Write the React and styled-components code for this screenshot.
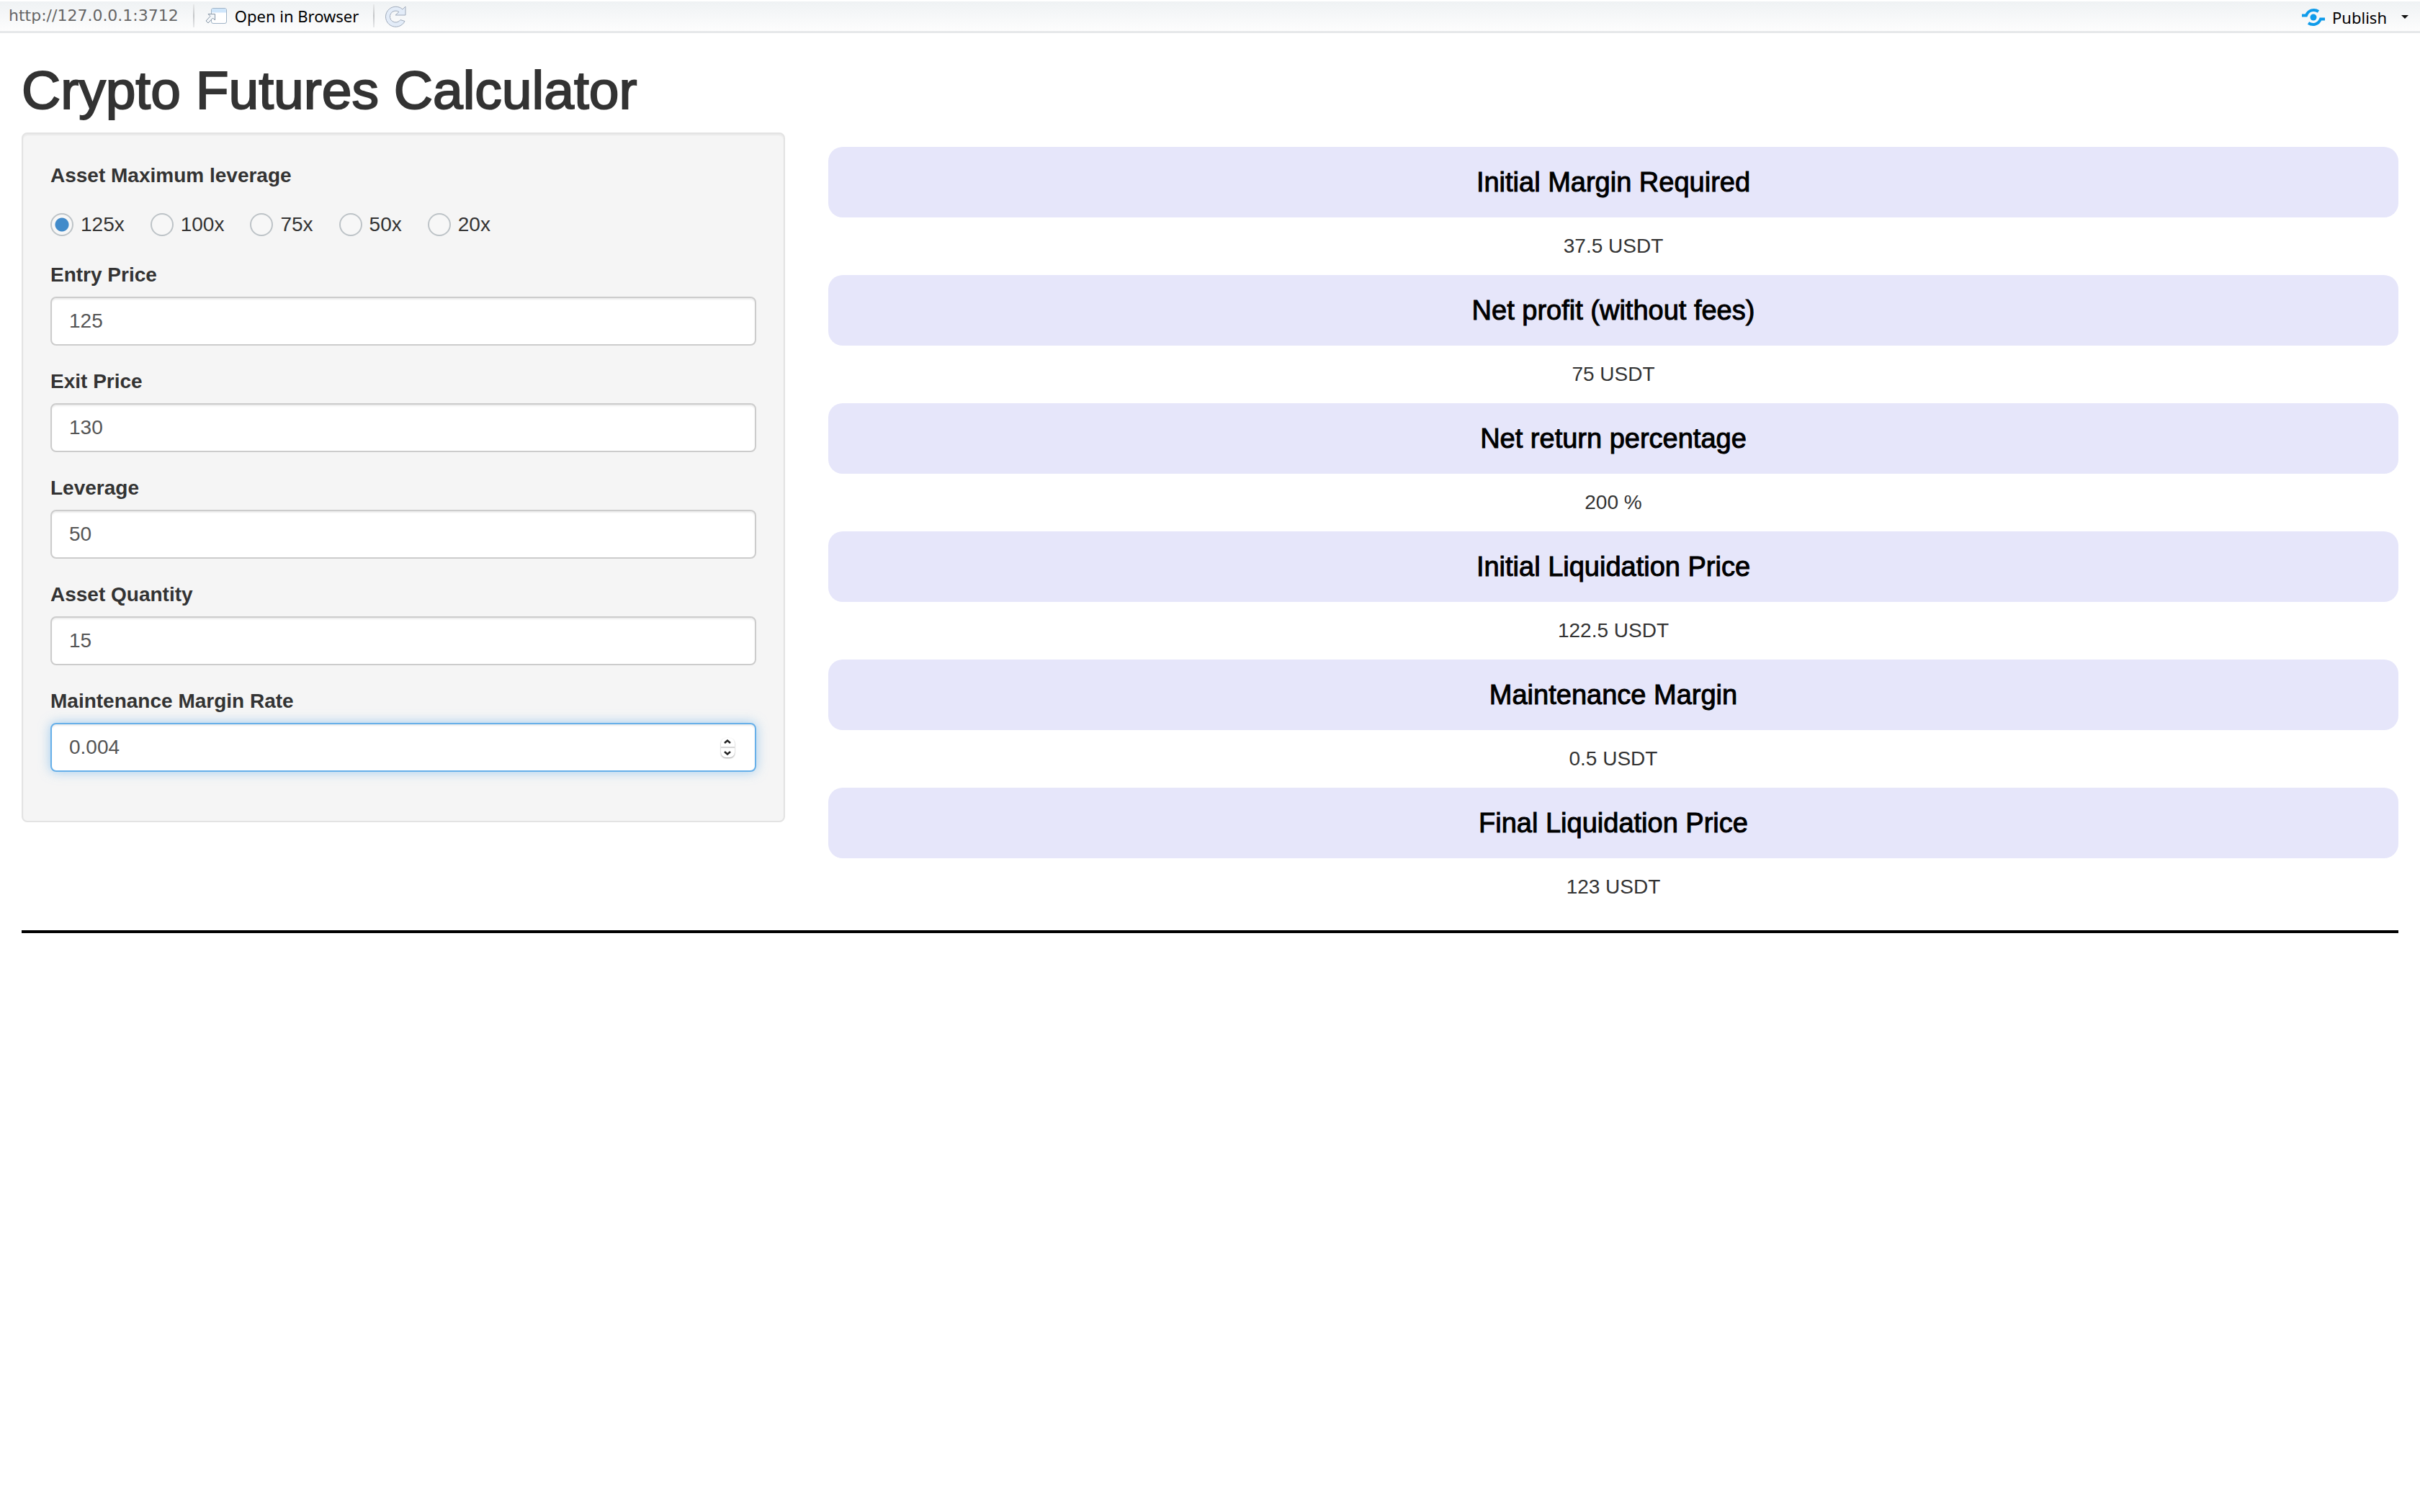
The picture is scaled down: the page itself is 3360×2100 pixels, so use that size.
import React, { useState } from 'react';
import styled, { createGlobalStyle } from 'styled-components';

const GlobalStyle = createGlobalStyle`
  *, *::before, *::after { box-sizing: border-box; }
  body {
    margin: 0;
    background: #fff;
    color: #333;
    font-family: "Liberation Sans", Arial, sans-serif;
    font-size: 28px;
    line-height: 40px;
  }
`;

const Toolbar = styled.header`
  display: flex;
  align-items: center;
  height: 46px;
  padding: 0 16px 2px 12px;
  border-top: 2px solid #fff;
  border-bottom: 3px solid #e6e8ea;
  background: linear-gradient(#eff2f4, #fdfdfd);
  font-family: "Noto Sans", "Open Sans", sans-serif;
  font-size: 22px;
  line-height: 30px;
`;

const Address = styled.span`
  color: #666;
  font-family: "DejaVu Sans", Verdana, sans-serif;
`;

const Divider = styled.span`
  width: 2px;
  height: 32px;
  margin: 0 14px 0 20px;
  background: linear-gradient(#e8e9ea, #c4c6c8 50%, #e8e9ea);
`;

const ToolButton = styled.button`
  display: inline-flex;
  align-items: center;
  gap: 10px;
  padding: ${(p) => (p.$end ? '4px 0 0' : 0)};
  border: 0;
  background: none;
  color: #000;
  font: inherit;
  margin-left: ${(p) => (p.$end ? 'auto' : 0)};
`;

const Caret = styled.span`
  margin-left: 10px;
  border: 5px solid transparent;
  border-top-color: #111;
  border-bottom: 0;
`;

const Page = styled.main`
  padding: 40px 30px 0;
`;

const Title = styled.h1`
  margin: 0 0 20px;
  font-size: 75px;
  font-weight: 400;
  line-height: 78px;
  -webkit-text-stroke: 2px currentColor;
`;

const Columns = styled.div`
  display: grid;
  grid-template-columns: calc((100% + 60px) / 3 - 60px) minmax(0, 1fr);
  gap: 60px;
  align-items: start;
`;

const Well = styled.form`
  padding: 38px;
  border: 2px solid #e3e3e3;
  border-radius: 8px;
  background: #f5f5f5;
  box-shadow: inset 0 2px 2px rgba(0, 0, 0, 0.05);
`;

const RadioGroup = styled.fieldset`
  margin: 0 0 30px;
  padding: 0;
  border: 0;
`;

const Legend = styled.legend`
  padding: 0;
  font-weight: 700;
`;

const Options = styled.div`
  display: flex;
  gap: 36px;
  margin-top: 28px;
`;

const Option = styled.label`
  display: flex;
  align-items: center;
  gap: 10px;
`;

const Radio = styled.input`
  appearance: none;
  width: 32px;
  height: 32px;
  margin: 0;
  border: 2px solid #bdc3c7;
  border-radius: 50%;
  background: #f7f7f7;
  &:checked {
    background: radial-gradient(circle, #428bca 9px, #f7f7f7 10px);
  }
`;

const Field = styled.div`
  display: flex;
  flex-direction: column;
  gap: 10px;
  margin-bottom: 30px;
`;

const FieldLabel = styled.label`
  font-weight: 700;
`;

const InputFrame = styled.div`
  display: flex;
  align-items: center;
  height: 68px;
  padding-right: 24px;
  border: 2px solid ${(p) => (p.$active ? '#66afe9' : '#ccc')};
  border-radius: 8px;
  background: #fff;
  box-shadow: inset 0 2px 2px rgba(0, 0, 0, 0.075)
    ${(p) => (p.$active ? ', 0 0 16px rgba(102, 175, 233, 0.6)' : '')};
`;

const NumberInput = styled.input`
  appearance: textfield;
  flex: 1;
  min-width: 0;
  height: 100%;
  padding: 0 24px;
  border: 0;
  outline: 0;
  background: none;
  color: #555;
  font: inherit;
  &::-webkit-inner-spin-button { appearance: none; margin: 0; }
`;

const Stepper = styled.div`
  display: flex;
  flex-direction: column;
  width: 19px;
  height: 27px;
  margin-right: 4px;
  border-radius: 7px;
  background: #fff;
  box-shadow: 0 1px 2px rgba(0, 0, 0, 0.4);
`;

const Step = styled.button`
  display: flex;
  flex: 1;
  align-items: center;
  justify-content: center;
  padding: 0;
  border: 0;
  background: none;
  & + & { border-top: 2px solid #d8d8d8; }
`;

const Results = styled.section`
  padding-top: 20px;
`;

const ResultTitle = styled.h4`
  display: flex;
  align-items: center;
  justify-content: center;
  height: 98px;
  margin: 0 0 20px;
  border-radius: 20px;
  background: #e6e6fa;
  color: #000;
  font-size: 38px;
  font-weight: 400;
  -webkit-text-stroke: 1px currentColor;
`;

const ResultValue = styled.div`
  margin-bottom: 20px;
  text-align: center;
`;

const Rule = styled.hr`
  height: 4px;
  margin: 20px 0 0;
  border: 0;
  background: #000;
`;

const LEVERAGES = ['125x', '100x', '75x', '50x', '20x'];

const FIELDS = [
  { id: 'entry', label: 'Entry Price', value: '125' },
  { id: 'exit', label: 'Exit Price', value: '130' },
  { id: 'leverage', label: 'Leverage', value: '50' },
  { id: 'quantity', label: 'Asset Quantity', value: '15' },
  { id: 'rate', label: 'Maintenance Margin Rate', value: '0.004', active: true },
];

const RESULTS = [
  ['Initial Margin Required', '37.5 USDT'],
  ['Net profit (without fees)', '75 USDT'],
  ['Net return percentage', '200 %'],
  ['Initial Liquidation Price', '122.5 USDT'],
  ['Maintenance Margin', '0.5 USDT'],
  ['Final Liquidation Price', '123 USDT'],
];

const WindowIcon = () => (
  <svg width="32" height="28" viewBox="0 0 32 28" aria-hidden="true">
    <rect x="9.5" y="3.5" width="21" height="21" rx="2.5" fill="#fff" stroke="#9fb3c6" />
    <path d="M10 9.500V6q0-2 2-2h16q2 0 2 2v3.500z" fill="#cfe6fb" />
    <path d="M5 11.500h9.500V20l-3-3-6.500 7-3-3 6-6.500z" fill="#f4f7fa" stroke="#8595a5" strokeLinejoin="round" />
  </svg>
);

const RefreshIcon = () => (
  <svg width="30" height="34" viewBox="0 -2 30 34" aria-hidden="true">
    <path
      d="M29 2v12H15l5-4.500a8 8 0 1 0 2 11l6 2A14 14 0 1 1 25 6z"
      fill="#e3ecf8"
      stroke="#a0abbb"
      strokeLinejoin="round"
    />
  </svg>
);

const PublishIcon = () => (
  <svg width="32" height="26" viewBox="0 0 32 26" fill="none" stroke="#0f9bea" strokeWidth="4" aria-hidden="true">
    <circle cx="16" cy="13" r="4.5" fill="#0f9bea" stroke="none" />
    <path d="M0 10.500h6C9 3 17 1 23 5" />
    <path d="M32 15.500h-6C23 23 15 25 9 21" />
  </svg>
);

const Chevron = ({ d }) => (
  <svg width="10" height="7" viewBox="0 0 10 7" fill="none" stroke="#222" strokeWidth="2.5" aria-hidden="true">
    <path d={d} />
  </svg>
);

function NumberField({ id, label, value, active }) {
  const [current, setCurrent] = useState(value);
  const step = (by) => setCurrent((v) => String(Number((Number(v) + by).toFixed(3))));
  return (
    <Field>
      <FieldLabel htmlFor={id}>{label}</FieldLabel>
      <InputFrame $active={active}>
        <NumberInput id={id} type="number" step="any" value={current} onChange={(e) => setCurrent(e.target.value)} />
        {active && (
          <Stepper>
            <Step type="button" aria-label="Increase" onClick={() => step(0.001)}><Chevron d="M1 5l4-3.500 4 3.500" /></Step>
            <Step type="button" aria-label="Decrease" onClick={() => step(-0.001)}><Chevron d="M1 2l4 3.500 4-3.500" /></Step>
          </Stepper>
        )}
      </InputFrame>
    </Field>
  );
}

export default function App() {
  return (
    <>
      <GlobalStyle />
      <Toolbar>
        <Address>http://127.0.0.1:3712</Address>
        <Divider />
        <ToolButton type="button"><WindowIcon />Open in Browser</ToolButton>
        <Divider />
        <ToolButton type="button" aria-label="Refresh"><RefreshIcon /></ToolButton>
        <ToolButton type="button" $end><PublishIcon />Publish<Caret /></ToolButton>
      </Toolbar>
      <Page>
        <Title>Crypto Futures Calculator</Title>
        <Columns>
          <Well>
            <RadioGroup>
              <Legend>Asset Maximum leverage</Legend>
              <Options>
                {LEVERAGES.map((name, i) => (
                  <Option key={name}>
                    <Radio type="radio" name="max-leverage" value={name} defaultChecked={i === 0} />
                    {name}
                  </Option>
                ))}
              </Options>
            </RadioGroup>
            {FIELDS.map((field) => <NumberField key={field.id} {...field} />)}
          </Well>
          <Results>
            {RESULTS.map(([name, value]) => (
              <React.Fragment key={name}>
                <ResultTitle>{name}</ResultTitle>
                <ResultValue>{value}</ResultValue>
              </React.Fragment>
            ))}
          </Results>
        </Columns>
        <Rule />
      </Page>
    </>
  );
}
